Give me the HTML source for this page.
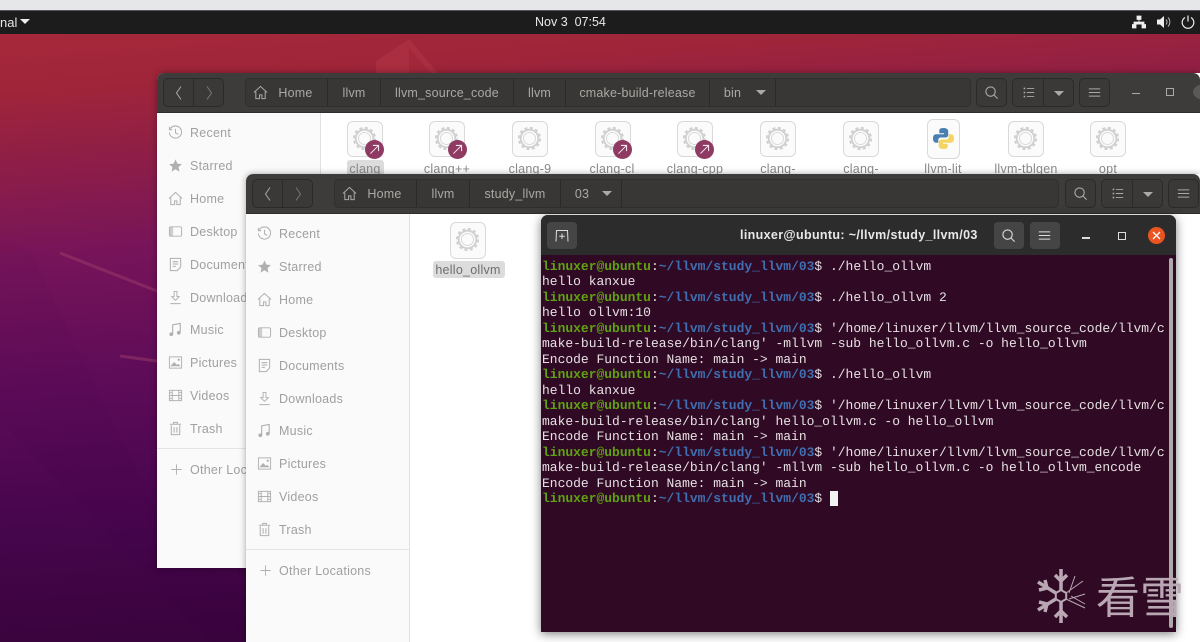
<!DOCTYPE html>
<html lang="en"><head><meta charset="utf-8"><title>Ubuntu desktop</title>
<style>
html,body{margin:0;padding:0}
body{width:1200px;height:642px;position:relative;overflow:hidden;background:#000;font-family:"Liberation Sans","DejaVu Sans",sans-serif}
div,span,svg{position:absolute}
pre span,pre b{position:static}
.wp{left:0;top:34px;width:1200px;height:608px;background:linear-gradient(176deg,#a6283a 0%,#a02539 8%,#8e1e47 19%,#76145a 33%,#5f0c58 50%,#4a064f 68%,#3c0440 85%,#35033a 100%)}
.top{left:0;top:0;width:1200px;height:10px;background:#e6e7e9}
.bar{left:0;top:10px;width:1200px;height:24px;background:#1c1c1c;border-top:1px solid #55555a;box-sizing:border-box;color:#e8e8e8;font-size:12.5px;line-height:23px}
.win{background:#fff;box-shadow:0 0 7px rgba(0,0,0,.35)}
.hd{left:0;top:0;height:40px;background:#3d3c3a;border-radius:7px 7px 0 0;border-bottom:1px solid #2f2e2c;box-sizing:border-box}
.side{left:0;top:40px;background:#fafafa;border-right:1px solid #e2e2e2;box-sizing:border-box}
.side svg{color:#b0b0b0}
.btn{top:5px;height:29px;background:#3a3937;border:1px solid #2b2a29;border-radius:5px;box-sizing:border-box}
.path{top:5px;height:29px;background:#383735;border:1px solid #302f2d;border-radius:5px;box-sizing:border-box}
.seg{top:0;height:27px;border-right:1px solid #2b2a29;color:#a9a9a6;font-size:12.5px;line-height:29px;text-align:center;letter-spacing:.2px;box-sizing:border-box}
.sep{top:0;width:1px;height:27px;background:#2b2a29}
.tri{width:0;height:0;border-left:5px solid transparent;border-right:5px solid transparent;border-top:5px solid #a9a9a6}
.r{color:#a0a0a0;font-size:12.5px;letter-spacing:.25px;white-space:nowrap;line-height:16px;transform:translateY(1px)}
.hr{height:1px;background:#e4e4e4}
.ic{width:36px;height:36px;background:#fbfbfb;border:1.5px solid #d9d9d9;border-radius:6px;box-sizing:border-box}
.ic svg{left:3px;top:3px}
.lb{color:#8a8a8a;font-size:12.5px;text-align:center;white-space:nowrap;line-height:16px;letter-spacing:.25px;transform:translateY(1px)}
.badge{width:19px;height:19px;border-radius:50%;background:#8f3a63}
.term{left:541px;top:215px;width:635px;height:417px;background:#300a24;border-radius:7px 7px 0 0;box-shadow:0 2px 10px rgba(0,0,0,.5)}
.thd{left:0;top:0;width:635px;height:40px;background:#2c2c2c;border-radius:7px 7px 0 0}
.tb{top:7px;width:30px;height:27px;background:#454545;border-radius:4px}
pre{position:absolute;left:1px;top:44px;margin:0;font:12.97px/15.48px "Liberation Mono","DejaVu Sans Mono",monospace;color:#e6e1e3;white-space:pre;width:625px;overflow:hidden;text-rendering:geometricPrecision}
b{font-weight:bold}
.g{color:#5fa212}.u{color:#3f6fb0;font-weight:bold}
</style></head><body>
<svg width="0" height="0" style="left:0;top:0">
<defs>
<symbol id="gear" viewBox="0 0 27 27"><circle cx="13.500" cy="13.500" r="10.600" fill="none" stroke="#d0d0d0" stroke-width="2" stroke-dasharray="3 2.550"/><circle cx="13.500" cy="13.500" r="8.800" fill="none" stroke="#d0d0d0" stroke-width="1.800"/><circle cx="13.500" cy="13.500" r="6" fill="none" stroke="#dadada" stroke-width="1"/></symbol>
<symbol id="home" viewBox="0 0 16 16"><path d="M1 8 8 1.500 15 8M3 7v7.500h4v-4h2.500v4H13V7" fill="none" stroke="currentColor" stroke-width="1.100"/></symbol>
<symbol id="recent" viewBox="0 0 16 16"><path d="M2.500 4A6.500 6.500 0 1 1 1.500 8M8 4v4.500l3 1.500M1.500 2v3h3" fill="none" stroke="currentColor" stroke-width="1.100"/></symbol>
<symbol id="star" viewBox="0 0 16 16"><path d="M8 1.500 10 6l4.800.5-3.600 3.200 1 4.800L8 12l-4.200 2.500 1-4.800L1.200 6.500 6 6z" fill="currentColor"/></symbol>
<symbol id="desk" viewBox="0 0 16 16"><rect x="1.500" y="3" width="13" height="10" rx="1.500" fill="none" stroke="currentColor" stroke-width="1"/><rect x="1.500" y="3" width="4" height="10" fill="currentColor" opacity=".6"/></symbol>
<symbol id="doc" viewBox="0 0 16 16"><path d="M2.500 1.500h11v9l-3.500 4H2.500zM5 5h6M5 7.500h6M5 10h3.500" fill="none" stroke="currentColor" stroke-width="1.100"/></symbol>
<symbol id="dl" viewBox="0 0 16 16"><path d="M6.500 1.500h3V7H12L8 11 4 7h2.500zM2.500 14.500h11" fill="none" stroke="currentColor" stroke-width="1"/></symbol>
<symbol id="mus" viewBox="0 0 16 16"><path d="M5 13V3l8-1.500V11" fill="none" stroke="currentColor" stroke-width="1.200"/><circle cx="3.500" cy="13" r="2" fill="currentColor"/><circle cx="11.500" cy="11.500" r="2" fill="currentColor"/></symbol>
<symbol id="pic" viewBox="0 0 16 16"><rect x="1.500" y="2" width="13" height="12" fill="none" stroke="currentColor" stroke-width="1"/><path d="M2.500 12 6.500 7.500l3 3 1.500-1 2.500 2.500z" fill="currentColor"/><circle cx="11.500" cy="5" r="1.200" fill="currentColor"/></symbol>
<symbol id="vid" viewBox="0 0 16 16"><rect x="1.500" y="2.500" width="13" height="11" fill="none" stroke="currentColor" stroke-width="1"/><path d="M4.500 2.500v11M11.500 2.500v11M4.500 8h7M1.500 5h3M1.500 8h3M1.500 11h3M11.500 5h3M11.500 8h3M11.500 11h3" fill="none" stroke="currentColor" stroke-width="1"/></symbol>
<symbol id="tr" viewBox="0 0 16 16"><path d="M3.500 4.500v10h9v-10M2 3.500h12M6 3.500V1.500h4v2M6.500 6.500v6M9.500 6.500v6" fill="none" stroke="currentColor" stroke-width="1.100"/></symbol>
<symbol id="plus" viewBox="0 0 16 16"><path d="M8 2.500v11M2.500 8h11" stroke="currentColor" stroke-width="1"/></symbol>
<symbol id="srch" viewBox="0 0 16 16"><circle cx="7" cy="7" r="5" fill="none" stroke="currentColor" stroke-width="1.200"/><path d="m10.800 10.800 3.700 3.700" stroke="currentColor" stroke-width="1.200"/></symbol>
<symbol id="list" viewBox="0 0 16 16"><path d="M6 3h9M6 8h9M6 13h9" stroke="currentColor" stroke-width="1.200"/><path d="M2 2h2v2H2zM2 7h2v2H2zM2 12h2v2H2z" fill="currentColor"/></symbol>
<symbol id="burger" viewBox="0 0 16 16"><path d="M1 3.500h14M1 8h14M1 12.500h14" stroke="currentColor" stroke-width="1.200"/></symbol>
<symbol id="arrow" viewBox="0 0 16 16"><path d="M3 13 13 3M6 3h7v7" fill="none" stroke="#f2e6ec" stroke-width="1.300"/></symbol>
</defs></svg>

<div class="wp"></div>
<svg style="left:0;top:34px" width="1200" height="608" viewBox="0 34 1200 608">
<path d="M376 73V61L409 39 438 73z" fill="#b53a48" opacity=".45"/>
<path d="M409 48V73H431z" fill="#a02539" opacity=".8"/>
<path d="M0 240 30 250 160 520 246 600V642H210L0 420z" fill="#3a0440" opacity=".04"/>
<path d="M60 253 157 291" stroke="#a9476f" stroke-width="3" opacity=".4"/>
<path d="M120 356 157 361" stroke="#a9476f" stroke-width="3" opacity=".4"/>
</svg>

<div class="top"></div>
<div class="bar">
<span style="left:0;top:0;color:#e8e8e8;font-size:13px">nal</span>
<div class="tri" style="left:20px;top:8px;border-top-color:#eee"></div>
<span style="left:535px;top:0;white-space:pre">Nov 3  07:54</span>
<svg style="left:1132px;top:4px;color:#eee" width="14" height="14" viewBox="0 0 14 14"><path d="M5 1h4v3.500H5zM0 9.500h4V13H0zM10 9.500h4V13h-4zM7 4.500V7M2 9.500V7h10v2.500" fill="#eee" stroke="#eee" stroke-width=".8"/></svg>
<svg style="left:1157px;top:4px" width="14" height="14" viewBox="0 0 14 14"><path d="M0 4.500h3L7 1v12L3 9.500H0z" fill="#eee"/><path d="M9 4.500a3.500 3.500 0 0 1 0 5M11 2.500a6.500 6.500 0 0 1 0 9" fill="none" stroke="#bbb" stroke-width="1"/></svg>
<svg style="left:1181px;top:4px" width="14" height="14" viewBox="0 0 14 14"><path d="M4 2.500a5.800 5.800 0 1 0 6 0M7 .5v6" fill="none" stroke="#eee" stroke-width="1.200"/></svg>
</div>

<!-- back window -->
<div class="win" style="left:157px;top:73px;width:1043px;height:495px;border-radius:7px 0 0 0">
<div class="hd" style="width:1043px">
<div class="btn" style="left:6px;width:61px"><div class="sep" style="left:29px"></div>
<svg style="left:10px;top:6px" width="10" height="16" viewBox="0 0 10 16"><path d="M7 1.500 2.500 8 7 14.500" fill="none" stroke="#a9a9a6" stroke-width="1"/></svg>
<svg style="left:40px;top:6px" width="10" height="16" viewBox="0 0 10 16"><path d="M3 1.500 7.500 8 3 14.500" fill="none" stroke="#777" stroke-width="1"/></svg></div>
<div class="path" style="left:88px;width:726px">
<div class="seg" style="left:0;width:82px;padding-left:18px"><svg style="left:7px;top:6px;color:#a9a9a6" width="15" height="15"><use href="#home"/></svg>Home</div>
<div class="seg" style="left:82px;width:53px">llvm</div>
<div class="seg" style="left:135px;width:133px">llvm_source_code</div>
<div class="seg" style="left:268px;width:52px">llvm</div>
<div class="seg" style="left:320px;width:144px">cmake-build-release</div>
<div class="seg" style="left:464px;width:66px;padding-right:20px">bin<div class="tri" style="left:46px;top:11px"></div></div>
</div>
<div class="btn" style="left:819px;width:31px"><svg style="left:7px;top:6px;color:#a9a9a6" width="15" height="15"><use href="#srch"/></svg></div>
<div class="btn" style="left:855px;width:62px"><div class="sep" style="left:30px"></div><svg style="left:9px;top:7px;color:#a9a9a6" width="13" height="13"><use href="#list"/></svg><div class="tri" style="left:41px;top:12px"></div></div>
<div class="btn" style="left:922px;width:31px"><svg style="left:8px;top:7px;color:#a9a9a6" width="13" height="13"><use href="#burger"/></svg></div>
<div style="left:975px;top:20px;width:8px;height:1px;background:#a9a9a6"></div>
<div style="left:1009px;top:15px;width:6px;height:6px;border:1px solid #a9a9a6"></div>
<div style="left:1036px;top:11px;width:24px;height:16px;border-radius:50% 0 0 50%;background:#5a5957"></div>
</div>
<div class="side" style="width:164px;height:455px">
<svg style="left:11px;top:12px" width="15" height="15"><use href="#recent"/></svg><span class="r" style="left:33px;top:11px">Recent</span>
<svg style="left:11px;top:45px" width="15" height="15"><use href="#star"/></svg><span class="r" style="left:33px;top:44px">Starred</span>
<svg style="left:11px;top:78px" width="15" height="15"><use href="#home"/></svg><span class="r" style="left:33px;top:77px">Home</span>
<svg style="left:11px;top:111px" width="15" height="15"><use href="#desk"/></svg><span class="r" style="left:33px;top:110px">Desktop</span>
<svg style="left:11px;top:144px" width="15" height="15"><use href="#doc"/></svg><span class="r" style="left:33px;top:143px">Documents</span>
<svg style="left:11px;top:177px" width="15" height="15"><use href="#dl"/></svg><span class="r" style="left:33px;top:176px">Downloads</span>
<svg style="left:11px;top:209px" width="15" height="15"><use href="#mus"/></svg><span class="r" style="left:33px;top:208px">Music</span>
<svg style="left:11px;top:242px" width="15" height="15"><use href="#pic"/></svg><span class="r" style="left:33px;top:241px">Pictures</span>
<svg style="left:11px;top:275px" width="15" height="15"><use href="#vid"/></svg><span class="r" style="left:33px;top:274px">Videos</span>
<svg style="left:11px;top:308px" width="15" height="15"><use href="#tr"/></svg><span class="r" style="left:33px;top:307px">Trash</span>
<div class="hr" style="left:0;top:335px;width:163px"></div>
<svg style="left:12px;top:349px" width="15" height="15"><use href="#plus"/></svg><span class="r" style="left:33px;top:348px">Other Locations</span>
</div>
<!-- icons -->
<div class="ic" style="left:190px;top:48px"><svg width="27" height="27"><use href="#gear"/></svg></div>
<div class="ic" style="left:272px;top:48px"><svg width="27" height="27"><use href="#gear"/></svg></div>
<div class="ic" style="left:355px;top:48px"><svg width="27" height="27"><use href="#gear"/></svg></div>
<div class="ic" style="left:438px;top:48px"><svg width="27" height="27"><use href="#gear"/></svg></div>
<div class="ic" style="left:520px;top:48px"><svg width="27" height="27"><use href="#gear"/></svg></div>
<div class="ic" style="left:603px;top:48px"><svg width="27" height="27"><use href="#gear"/></svg></div>
<div class="ic" style="left:686px;top:48px"><svg width="27" height="27"><use href="#gear"/></svg></div>
<div class="ic" style="left:770px;top:46px;width:33px;height:40px"><svg style="left:5px;top:8px" width="21" height="21" viewBox="0 0 20 20"><path d="M10 0C6 0 6 1.500 6 3v2h4.500v1H3C1 6 0 7.500 0 10s1 4 3 4h2v-2.500C5 10 6 9 7.500 9H12c1.500 0 2.500-1 2.500-2.500V3c0-2-2-3-4.500-3z" fill="#4a7fb0"/><path d="M10 20c4 0 4-1.500 4-3v-2H9.500v-1H17c2 0 3-1.500 3-4s-1-4-3-4h-2v2.500c0 1.500-1 2.500-2.500 2.500H8c-1.500 0-2.500 1-2.500 2.500V17c0 2 2 3 4.500 3z" fill="#f5d561"/></svg></div>
<div class="ic" style="left:851px;top:48px"><svg width="27" height="27"><use href="#gear"/></svg></div>
<div class="ic" style="left:933px;top:48px"><svg width="27" height="27"><use href="#gear"/></svg></div>
<div class="badge" style="left:208px;top:67px"><svg style="left:3px;top:3px" width="13" height="13"><use href="#arrow"/></svg></div>
<div class="badge" style="left:291px;top:67px"><svg style="left:3px;top:3px" width="13" height="13"><use href="#arrow"/></svg></div>
<div class="badge" style="left:456px;top:67px"><svg style="left:3px;top:3px" width="13" height="13"><use href="#arrow"/></svg></div>
<div class="badge" style="left:538px;top:67px"><svg style="left:3px;top:3px" width="13" height="13"><use href="#arrow"/></svg></div>
<div style="left:190px;top:87px;width:37px;height:17px;background:#dcdcdc;border-radius:3px"></div>
<span class="lb" style="left:168px;width:80px;top:87px">clang</span>
<span class="lb" style="left:250px;width:80px;top:87px">clang++</span>
<span class="lb" style="left:333px;width:80px;top:87px">clang-9</span>
<span class="lb" style="left:415px;width:80px;top:87px">clang-cl</span>
<span class="lb" style="left:498px;width:80px;top:87px">clang-cpp</span>
<span class="lb" style="left:581px;width:80px;top:87px">clang-</span>
<span class="lb" style="left:664px;width:80px;top:87px">clang-</span>
<span class="lb" style="left:746px;width:80px;top:87px">llvm-lit</span>
<span class="lb" style="left:829px;width:80px;top:87px">llvm-tblgen</span>
<span class="lb" style="left:911px;width:80px;top:87px">opt</span>
</div>

<!-- front window -->
<div class="win" style="left:246px;top:174px;width:954px;height:468px;border-radius:7px 0 0 0;overflow:hidden">
<div class="hd" style="width:954px">
<div class="btn" style="left:6px;width:61px"><div class="sep" style="left:29px"></div>
<svg style="left:10px;top:6px" width="10" height="16" viewBox="0 0 10 16"><path d="M7 1.500 2.500 8 7 14.500" fill="none" stroke="#a9a9a6" stroke-width="1"/></svg>
<svg style="left:40px;top:6px" width="10" height="16" viewBox="0 0 10 16"><path d="M3 1.500 7.500 8 3 14.500" fill="none" stroke="#777" stroke-width="1"/></svg></div>
<div class="path" style="left:88px;width:725px">
<div class="seg" style="left:0;width:82px;padding-left:18px"><svg style="left:7px;top:6px;color:#a9a9a6" width="15" height="15"><use href="#home"/></svg>Home</div>
<div class="seg" style="left:82px;width:53px">llvm</div>
<div class="seg" style="left:135px;width:91px">study_llvm</div>
<div class="seg" style="left:226px;width:61px;padding-right:18px">03<div class="tri" style="left:41px;top:11px"></div></div>
</div>
<div class="btn" style="left:819px;width:31px"><svg style="left:7px;top:6px;color:#a9a9a6" width="15" height="15"><use href="#srch"/></svg></div>
<div class="btn" style="left:855px;width:62px"><div class="sep" style="left:30px"></div><svg style="left:9px;top:7px;color:#a9a9a6" width="13" height="13"><use href="#list"/></svg><div class="tri" style="left:41px;top:12px"></div></div>
<div class="btn" style="left:922px;width:31px"><svg style="left:8px;top:7px;color:#a9a9a6" width="13" height="13"><use href="#burger"/></svg></div>
</div>
<div class="side" style="width:164px;height:428px">
<svg style="left:11px;top:12px" width="15" height="15"><use href="#recent"/></svg><span class="r" style="left:33px;top:11px">Recent</span>
<svg style="left:11px;top:45px" width="15" height="15"><use href="#star"/></svg><span class="r" style="left:33px;top:44px">Starred</span>
<svg style="left:11px;top:78px" width="15" height="15"><use href="#home"/></svg><span class="r" style="left:33px;top:77px">Home</span>
<svg style="left:11px;top:111px" width="15" height="15"><use href="#desk"/></svg><span class="r" style="left:33px;top:110px">Desktop</span>
<svg style="left:11px;top:144px" width="15" height="15"><use href="#doc"/></svg><span class="r" style="left:33px;top:143px">Documents</span>
<svg style="left:11px;top:177px" width="15" height="15"><use href="#dl"/></svg><span class="r" style="left:33px;top:176px">Downloads</span>
<svg style="left:11px;top:209px" width="15" height="15"><use href="#mus"/></svg><span class="r" style="left:33px;top:208px">Music</span>
<svg style="left:11px;top:242px" width="15" height="15"><use href="#pic"/></svg><span class="r" style="left:33px;top:241px">Pictures</span>
<svg style="left:11px;top:275px" width="15" height="15"><use href="#vid"/></svg><span class="r" style="left:33px;top:274px">Videos</span>
<svg style="left:11px;top:308px" width="15" height="15"><use href="#tr"/></svg><span class="r" style="left:33px;top:307px">Trash</span>
<div class="hr" style="left:0;top:335px;width:163px"></div>
<svg style="left:12px;top:349px" width="15" height="15"><use href="#plus"/></svg><span class="r" style="left:33px;top:348px">Other Locations</span>
</div>
<div class="ic" style="left:204px;top:48px;height:37px"><svg width="27" height="27"><use href="#gear"/></svg></div>
<div style="left:187px;top:87px;width:72px;height:17px;background:#dcdcdc;border-radius:3px"></div>
<span class="lb" style="left:182px;width:80px;top:87px;color:#6e6e6e">hello_ollvm</span>
</div>

<!-- terminal -->
<div class="term">
<div class="thd">
<div class="tb" style="left:6px"><svg style="left:8px;top:7px" width="14" height="14" viewBox="0 0 14 14"><path d="M1 12.500 1.500 1.500h11l.5 11M7 4.500v5.500M4.200 7.200h5.600" fill="none" stroke="#ddd" stroke-width="1"/></svg></div>
<span style="left:199px;top:12px;color:#e8e8e8;font-size:12.5px;font-weight:bold;white-space:nowrap;letter-spacing:.35px;line-height:16px">linuxer@ubuntu: ~/llvm/study_llvm/03</span>
<div class="tb" style="left:453px"><svg style="left:7px;top:6px;color:#ddd" width="15" height="15"><use href="#srch"/></svg></div>
<div class="tb" style="left:489px"><svg style="left:8px;top:7px;color:#ddd" width="13" height="13"><use href="#burger"/></svg></div>
<div style="left:541px;top:22px;width:8px;height:1.500px;background:#ddd"></div>
<div style="left:577px;top:17px;width:6px;height:6px;border:1px solid #ddd"></div>
<div style="left:607px;top:12px;width:17px;height:17px;border-radius:50%;background:#e95420"></div>
<svg style="left:611px;top:16px" width="9" height="9" viewBox="0 0 9 9"><path d="M1 1l7 7M8 1 1 8" stroke="#fff" stroke-width="1.300"/></svg>
</div>
<pre><span class="g"><b>linuxer@ubuntu</b></span>:<span class="u">~/llvm/study_llvm/03</span>$ ./hello_ollvm
hello kanxue
<span class="g"><b>linuxer@ubuntu</b></span>:<span class="u">~/llvm/study_llvm/03</span>$ ./hello_ollvm 2
hello ollvm:10
<span class="g"><b>linuxer@ubuntu</b></span>:<span class="u">~/llvm/study_llvm/03</span>$ '/home/linuxer/llvm/llvm_source_code/llvm/c
make-build-release/bin/clang' -mllvm -sub hello_ollvm.c -o hello_ollvm
Encode Function Name: main -&gt; main
<span class="g"><b>linuxer@ubuntu</b></span>:<span class="u">~/llvm/study_llvm/03</span>$ ./hello_ollvm
hello kanxue
<span class="g"><b>linuxer@ubuntu</b></span>:<span class="u">~/llvm/study_llvm/03</span>$ '/home/linuxer/llvm/llvm_source_code/llvm/c
make-build-release/bin/clang' hello_ollvm.c -o hello_ollvm
Encode Function Name: main -&gt; main
<span class="g"><b>linuxer@ubuntu</b></span>:<span class="u">~/llvm/study_llvm/03</span>$ '/home/linuxer/llvm/llvm_source_code/llvm/c
make-build-release/bin/clang' -mllvm -sub hello_ollvm.c -o hello_ollvm_encode
Encode Function Name: main -&gt; main
<span class="g"><b>linuxer@ubuntu</b></span>:<span class="u">~/llvm/study_llvm/03</span>$ </pre>
<div style="left:289px;top:276px;width:8px;height:15px;background:#f2f2f2"></div>
<div style="left:628px;top:43px;width:4px;height:370px;border-radius:2px;background:#aeaaac"></div>
</div>

<!-- watermark -->
<svg style="left:1033px;top:566px" width="56" height="60" viewBox="-28 -30 56 60" fill="none" stroke="#b9a8b4" stroke-width="3.500">
<polygon points="0,-6 5.200,-3 5.200,3 0,6 -5.200,3 -5.200,-3" stroke-width="2"/>
<path d="M0-6V-27M-6-21 0-15 6-21M0 6V27M-6 21 0 15 6 21M-5.200-3-23-14M-22-6-14-8-16-16M-5.200 3-23 14M-22 6-14 8-16 16"/>
<path d="M5-3 22-15M5 3 24 12M8-3 14-20M8 3 24-2M10 0 24 8" stroke-width="1"/>
</svg>
<span style="left:1096px;top:566px;color:#b9a8b4;font:400 44px/56px 'Noto Sans CJK SC','WenQuanYi Zen Hei',sans-serif;white-space:nowrap">看雪</span>
</body></html>
